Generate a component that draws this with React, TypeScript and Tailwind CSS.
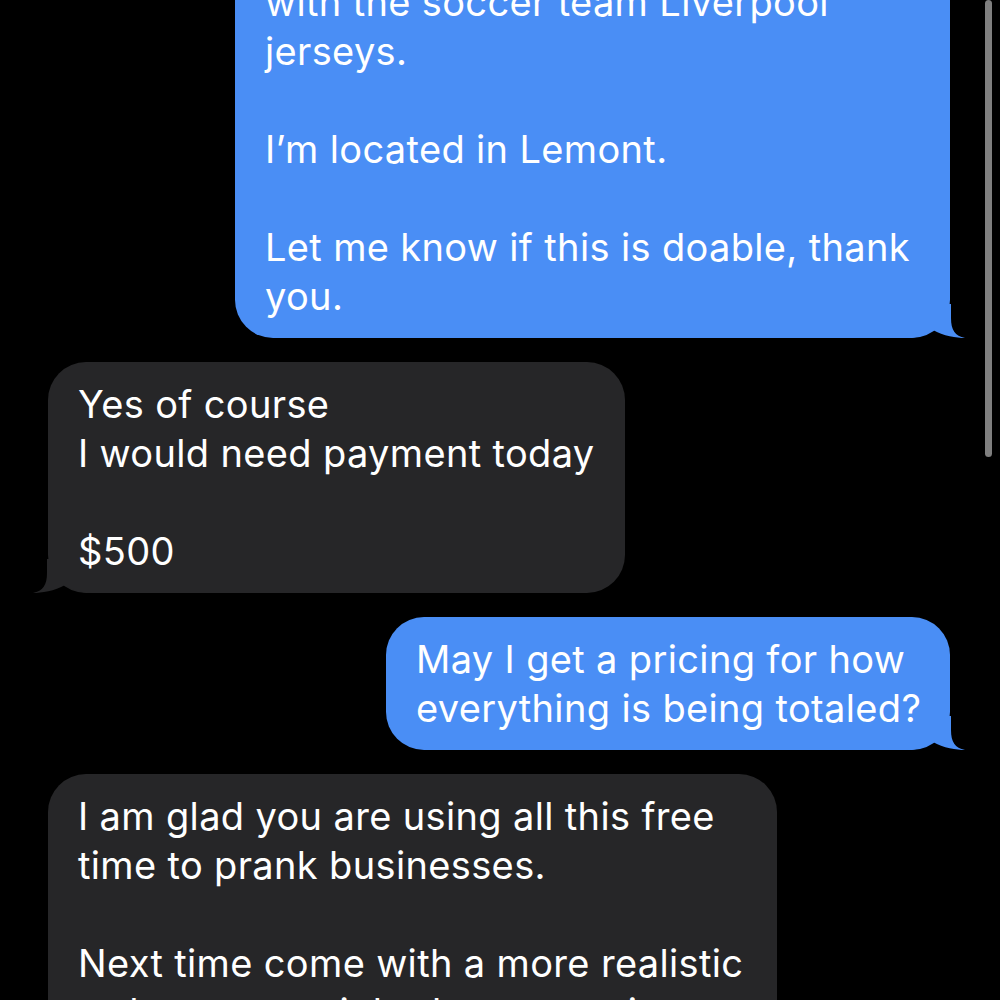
import type { ReactNode } from 'react';

type Side = 'me' | 'them';

function Tail({ side }: { side: Side }) {
  const fill = side === 'me' ? '#4a8ef5' : '#262628';
  return (
    <svg
      width="60"
      height="34"
      viewBox="0 0 60 34"
      className={
        side === 'me'
          ? 'absolute bottom-0 right-[-15px]'
          : 'absolute bottom-0 left-[-15px] -scale-x-100'
      }
    >
      <path
        d="M0 0 L46 0 L46 14 C46 26 50 32 60 34 C52 34 38 32 28 26 C22 31 12 34 0 34 Z"
        fill={fill}
      />
    </svg>
  );
}

function Bubble({ side, width, children }: { side: Side; width: string; children: ReactNode }) {
  const isMe = side === 'me';
  return (
    <div className={isMe ? 'flex justify-end pr-[50px]' : 'flex justify-start pl-[48px]'}>
      <div
        className={`relative rounded-[38px] px-[30px] py-[17.5px] text-[38px] leading-[49px] tracking-[0.35px] text-white whitespace-pre ${width} ${
          isMe ? 'bg-[#4a8ef5]' : 'bg-[#262628]'
        }`}
      >
        <Tail side={side} />
        <span className="relative">{children}</span>
      </div>
    </div>
  );
}

export default function App() {
  return (
    <div
      className="relative h-[1000px] w-[1000px] overflow-hidden bg-black"
      style={{ fontFamily: 'Inter, "Noto Sans", sans-serif' }}
    >
      <div className="-mt-[89px] flex flex-col gap-[24px]">
        <Bubble side="me" width="w-[715px]">
          {'I would like 20 custom shirts made\nwith the soccer team Liverpool\njerseys.\n\nI\u2019m located in Lemont.\n\nLet me know if this is doable, thank\nyou.'}
        </Bubble>
        <Bubble side="them" width="w-[577px]">
          {'Yes of course\nI would need payment today\n\n$500'}
        </Bubble>
        <Bubble side="me" width="w-[564px]">
          {'May I get a pricing for how\neverything is being totaled?'}
        </Bubble>
        <Bubble side="them" width="w-[729px]">
          {'I am glad you are using all this free\ntime to prank businesses.\n\nNext time come with a more realistic\norder so we might then get to it.'}
        </Bubble>
      </div>

      {/* scroll indicator */}
      <div className="absolute right-[8px] top-0 h-[457px] w-[7px] rounded-full bg-[#7f7f7f]" />
    </div>
  );
}
